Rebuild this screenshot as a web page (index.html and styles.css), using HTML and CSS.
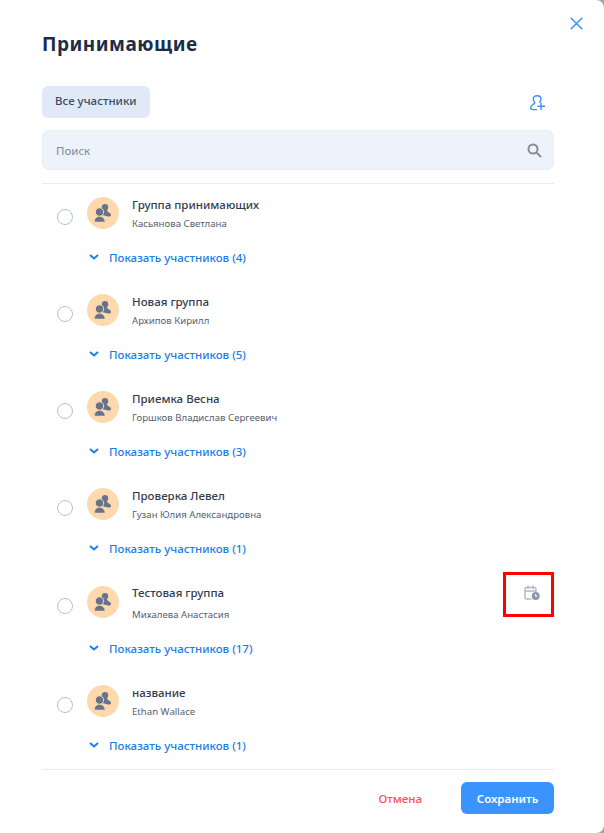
FILE: index.html
```html
<!DOCTYPE html>
<html lang="ru">
<head>
<meta charset="utf-8">
<title>Принимающие</title>
<link rel="stylesheet" href="styles.css">
</head>
<body>
<div class="modal">
  <button class="close" aria-label="Закрыть">
    <svg width="13" height="13" viewBox="0 0 13 13"><path d="M.7.7l11.600 11.600M12.300.7L.7 12.300" stroke="#3b94fb" stroke-width="1.500" fill="none"/></svg>
  </button>
  <h1 class="title">Принимающие</h1>
  <div class="tabs">
    <div class="tab">Все участники</div>
    <svg class="add" width="16" height="16" viewBox="0 0 16 16" fill="none" stroke="#3b94fb" stroke-width="1.400"><path d="M9.300 7.500C10.500 6.200 11 5 11 4 11 1.800 9.300.7 7.200.7 5 .7 3.300 1.800 3.300 4c0 1.300.7 2.700 1.500 3.500.2 1-1.300 1.500-2.500 2.500C1 11 .7 11.800.7 12.800.7 14 1.500 14.600 2.800 14.600H7"/><path d="M11 7.500V15M7.500 11.300H15"/></svg>
  </div>
  <div class="search">
    <span>Поиск</span>
    <svg width="15" height="15" viewBox="0 0 15 15" fill="none" stroke="#868e9b" stroke-width="2"><circle cx="6" cy="6" r="4.500"/><path d="M9.500 9.500l4.500 4.500"/></svg>
  </div>
  <div class="list">
    <div class="item">
      <div class="row">
        <span class="radio"></span>
        <span class="avatar"><svg width="18" height="18" viewBox="0 0 18 18"><circle cx="11" cy="3.200" r="3.200" fill="#66738a"/><path d="M9 6h4c.3 1 .6 1.800 1.500 2.300 1.300.6 2.500 1.200 2.500 2.700 0 1-1 1.500-3 1.500L8 11z" fill="#66738a"/><circle cx="5.500" cy="8" r="4.200" fill="#66738a" stroke="#fed9ae" stroke-width="1"/><path d="M.5 18c-.3-3 1.500-5 4-5.500h2c2.500.5 4.500 2.500 4.500 5.500z" fill="#66738a" stroke="#fed9ae" stroke-width=".5"/></svg></span>
        <div class="info"><div class="name">Группа принимающих</div><div class="sub">Касьянова Светлана</div></div>
      </div>
      <div class="show"><svg width="10" height="6" viewBox="0 0 10 6" fill="none" stroke="#1a7de8" stroke-width="2"><path d="M1 1l4 3.500L9 1"/></svg>Показать участников (4)</div>
    </div>
    <div class="item">
      <div class="row">
        <span class="radio"></span>
        <span class="avatar"><svg width="18" height="18" viewBox="0 0 18 18"><circle cx="11" cy="3.200" r="3.200" fill="#66738a"/><path d="M9 6h4c.3 1 .6 1.800 1.500 2.300 1.300.6 2.500 1.200 2.500 2.700 0 1-1 1.500-3 1.500L8 11z" fill="#66738a"/><circle cx="5.500" cy="8" r="4.200" fill="#66738a" stroke="#fed9ae" stroke-width="1"/><path d="M.5 18c-.3-3 1.500-5 4-5.500h2c2.500.5 4.500 2.500 4.500 5.500z" fill="#66738a" stroke="#fed9ae" stroke-width=".5"/></svg></span>
        <div class="info"><div class="name">Новая группа</div><div class="sub">Архипов Кирилл</div></div>
      </div>
      <div class="show"><svg width="10" height="6" viewBox="0 0 10 6" fill="none" stroke="#1a7de8" stroke-width="2"><path d="M1 1l4 3.500L9 1"/></svg>Показать участников (5)</div>
    </div>
    <div class="item">
      <div class="row">
        <span class="radio"></span>
        <span class="avatar"><svg width="18" height="18" viewBox="0 0 18 18"><circle cx="11" cy="3.200" r="3.200" fill="#66738a"/><path d="M9 6h4c.3 1 .6 1.800 1.500 2.300 1.300.6 2.500 1.200 2.500 2.700 0 1-1 1.500-3 1.500L8 11z" fill="#66738a"/><circle cx="5.500" cy="8" r="4.200" fill="#66738a" stroke="#fed9ae" stroke-width="1"/><path d="M.5 18c-.3-3 1.500-5 4-5.500h2c2.500.5 4.500 2.500 4.500 5.500z" fill="#66738a" stroke="#fed9ae" stroke-width=".5"/></svg></span>
        <div class="info"><div class="name">Приемка Весна</div><div class="sub">Горшков Владислав Сергеевич</div></div>
      </div>
      <div class="show"><svg width="10" height="6" viewBox="0 0 10 6" fill="none" stroke="#1a7de8" stroke-width="2"><path d="M1 1l4 3.500L9 1"/></svg>Показать участников (3)</div>
    </div>
    <div class="item">
      <div class="row">
        <span class="radio"></span>
        <span class="avatar"><svg width="18" height="18" viewBox="0 0 18 18"><circle cx="11" cy="3.200" r="3.200" fill="#66738a"/><path d="M9 6h4c.3 1 .6 1.800 1.500 2.300 1.300.6 2.500 1.200 2.500 2.700 0 1-1 1.500-3 1.500L8 11z" fill="#66738a"/><circle cx="5.500" cy="8" r="4.200" fill="#66738a" stroke="#fed9ae" stroke-width="1"/><path d="M.5 18c-.3-3 1.500-5 4-5.500h2c2.500.5 4.500 2.500 4.500 5.500z" fill="#66738a" stroke="#fed9ae" stroke-width=".5"/></svg></span>
        <div class="info"><div class="name">Проверка Левел</div><div class="sub">Гузан Юлия Александровна</div></div>
      </div>
      <div class="show"><svg width="10" height="6" viewBox="0 0 10 6" fill="none" stroke="#1a7de8" stroke-width="2"><path d="M1 1l4 3.500L9 1"/></svg>Показать участников (1)</div>
    </div>
    <div class="item item-tall">
      <div class="row">
        <span class="radio"></span>
        <span class="avatar"><svg width="18" height="18" viewBox="0 0 18 18"><circle cx="11" cy="3.200" r="3.200" fill="#66738a"/><path d="M9 6h4c.3 1 .6 1.800 1.500 2.300 1.300.6 2.500 1.200 2.500 2.700 0 1-1 1.500-3 1.500L8 11z" fill="#66738a"/><circle cx="5.500" cy="8" r="4.200" fill="#66738a" stroke="#fed9ae" stroke-width="1"/><path d="M.5 18c-.3-3 1.500-5 4-5.500h2c2.500.5 4.500 2.500 4.500 5.500z" fill="#66738a" stroke="#fed9ae" stroke-width=".5"/></svg></span>
        <div class="info"><div class="name">Тестовая группа</div><div class="sub">Михалева Анастасия</div></div>
        <svg class="sched" width="16" height="16" viewBox="0 0 16 16" fill="none" stroke="#b0b9c6" stroke-width="1.400"><path d="M7.500 14H2.500C1.500 14 1 13.400 1 12.500V4C1 3 1.500 2.500 2.500 2.500h8C11.500 2.500 12 3 12 4v3.500M1 6h11M4 .5v3.500M9 .5v3.500"/><circle cx="11.700" cy="11" r="4" fill="#8d98aa" stroke="none"/><path d="M11.700 9v2.300h1.600" stroke="#fff" stroke-width="1"/></svg>
      </div>
      <div class="show"><svg width="10" height="6" viewBox="0 0 10 6" fill="none" stroke="#1a7de8" stroke-width="2"><path d="M1 1l4 3.500L9 1"/></svg>Показать участников (17)</div>
      <div class="mark"></div>
    </div>
    <div class="item">
      <div class="row">
        <span class="radio"></span>
        <span class="avatar"><svg width="18" height="18" viewBox="0 0 18 18"><circle cx="11" cy="3.200" r="3.200" fill="#66738a"/><path d="M9 6h4c.3 1 .6 1.800 1.500 2.300 1.300.6 2.500 1.200 2.500 2.700 0 1-1 1.500-3 1.500L8 11z" fill="#66738a"/><circle cx="5.500" cy="8" r="4.200" fill="#66738a" stroke="#fed9ae" stroke-width="1"/><path d="M.5 18c-.3-3 1.500-5 4-5.500h2c2.500.5 4.500 2.500 4.500 5.500z" fill="#66738a" stroke="#fed9ae" stroke-width=".5"/></svg></span>
        <div class="info"><div class="name">название</div><div class="sub">Ethan Wallace</div></div>
      </div>
      <div class="show"><svg width="10" height="6" viewBox="0 0 10 6" fill="none" stroke="#1a7de8" stroke-width="2"><path d="M1 1l4 3.500L9 1"/></svg>Показать участников (1)</div>
    </div>
  </div>
  <div class="footer">
    <span class="cancel">Отмена</span>
    <button class="save">Сохранить</button>
  </div>
</div>
</body>
</html>
```
FILE: styles.css
```css
* { box-sizing: border-box; }
html, body { margin: 0; height: 100%; }
body { background: #a3a6ab; font-family: "Noto Sans", "Open Sans", sans-serif; overflow: hidden; }
.modal { position: relative; width: 604px; height: 833px; background: #fff; border-radius: 0 8px 8px 0; padding: 31px 50px 0 42px; }
.close { position: absolute; top: 17px; right: 21px; width: 13px; height: 13px; padding: 0; border: 0; background: none; display: flex; }
.title { margin: 0; font-size: 19px; line-height: 27px; font-weight: 700; letter-spacing: .5px; color: #1b2d47; }
.tabs { display: flex; justify-content: space-between; align-items: center; margin-top: 28px; padding-right: 8px; }
.tab { height: 32px; width: 108px; background: #e0e9f7; border-radius: 6px; padding-left: 13px; font-size: 11.500px; line-height: 30px; font-weight: 500; color: #3f4a5c; }
.add { margin-top: 1px; }
.search { display: flex; align-items: center; justify-content: space-between; height: 40px; margin-top: 12px; padding: 0 11px 0 13px; background: #edf3fa; border: 1px solid #e8edf3; border-radius: 7px; font-size: 11.500px; color: #808997; }
.list { margin-top: 13px; border-top: 1px solid #e9ebee; border-bottom: 1px solid #e9ebee; }
.item { position: relative; padding: 13px 0 16px 15px; }
.row { display: flex; align-items: flex-start; }
.radio { width: 16px; height: 16px; margin-top: 12px; border: 1.300px solid #b9c0cb; border-radius: 50%; flex: none; }
.avatar { width: 32px; height: 32px; margin-left: 14px; border-radius: 50%; background: #fed9ae; display: flex; align-items: center; justify-content: center; flex: none; }
.info { margin-left: 13px; flex: 1; }
.name { font-size: 11.500px; line-height: 16px; font-weight: 500; color: #323c4c; }
.sub { font-size: 9.650px; line-height: 13px; margin-top: 4px; color: #566172; }
.item-tall .radio { margin-top: 13px; }
.item-tall .avatar { margin-top: 1px; }
.item-tall .sub { margin-top: 7px; }
.sched { margin: 0 14px 0 0; flex: none; }
.mark { position: absolute; top: 0; right: 0; width: 51px; height: 45px; border: 3px solid #f00; }
.show { display: flex; align-items: center; gap: 10px; height: 16px; margin-top: 19px; padding-left: 32px; font-size: 11.500px; font-weight: 500; color: #1a7de8; }
.footer { display: flex; justify-content: flex-end; align-items: center; margin-top: 12px; }
.cancel { font-size: 11.500px; font-weight: 500; color: #ff4f52; margin-right: 39px; }
.save { width: 93px; height: 32px; border: 0; border-radius: 6px; background: #3b94fd; color: #fff; font: 600 11.500px "Noto Sans", sans-serif; }
```
